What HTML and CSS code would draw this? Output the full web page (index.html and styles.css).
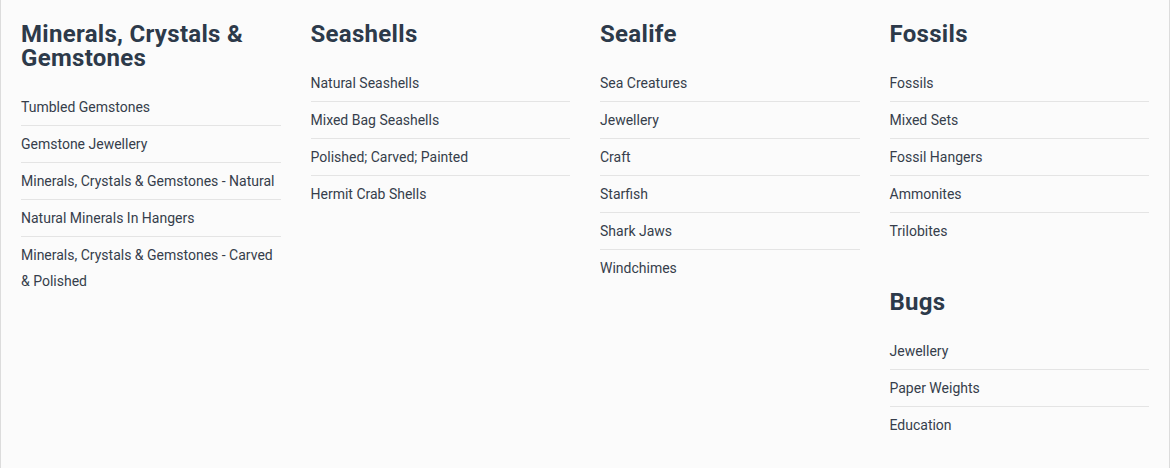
FILE: index.html
```html
<!DOCTYPE html>
<html lang="en">
<head>
<meta charset="utf-8">
<title>Categories</title>
<link rel="stylesheet" href="styles.css">
</head>
<body>
<nav class="mega">
  <div class="col">
    <section class="group">
      <h2 class="group-title">Minerals, Crystals &amp; Gemstones</h2>
      <ul class="links">
        <li><a href="#">Tumbled Gemstones</a></li>
        <li><a href="#">Gemstone Jewellery</a></li>
        <li><a href="#">Minerals, Crystals &amp; Gemstones - Natural</a></li>
        <li><a href="#">Natural Minerals In Hangers</a></li>
        <li><a href="#">Minerals, Crystals &amp; Gemstones - Carved &amp; Polished</a></li>
      </ul>
    </section>
  </div>
  <div class="col">
    <section class="group">
      <h2 class="group-title">Seashells</h2>
      <ul class="links">
        <li><a href="#">Natural Seashells</a></li>
        <li><a href="#">Mixed Bag Seashells</a></li>
        <li><a href="#">Polished; Carved; Painted</a></li>
        <li><a href="#">Hermit Crab Shells</a></li>
      </ul>
    </section>
  </div>
  <div class="col">
    <section class="group">
      <h2 class="group-title">Sealife</h2>
      <ul class="links">
        <li><a href="#">Sea Creatures</a></li>
        <li><a href="#">Jewellery</a></li>
        <li><a href="#">Craft</a></li>
        <li><a href="#">Starfish</a></li>
        <li><a href="#">Shark Jaws</a></li>
        <li><a href="#">Windchimes</a></li>
      </ul>
    </section>
  </div>
  <div class="col">
    <section class="group">
      <h2 class="group-title">Fossils</h2>
      <ul class="links">
        <li><a href="#">Fossils</a></li>
        <li><a href="#">Mixed Sets</a></li>
        <li><a href="#">Fossil Hangers</a></li>
        <li><a href="#">Ammonites</a></li>
        <li><a href="#">Trilobites</a></li>
      </ul>
    </section>
    <section class="group">
      <h2 class="group-title">Bugs</h2>
      <ul class="links">
        <li><a href="#">Jewellery</a></li>
        <li><a href="#">Paper Weights</a></li>
        <li><a href="#">Education</a></li>
      </ul>
    </section>
  </div>
</nav>
</body>
</html>
```

FILE: styles.css
```css
html, body {
  margin: 0;
  padding: 0;
  background: #ffffff;
}

body {
  font-family: Roboto, "Liberation Sans", sans-serif;
}

.mega {
  box-sizing: border-box;
  min-height: 468px;
  display: grid;
  grid-template-columns: repeat(4, 1fr);
  column-gap: 30px;
  align-items: start;
  padding: 22px 20px 20px 20px;
  background: #fbfbfb;
  border-left: 1px solid #dcdcdc;
  border-right: 1px solid #dcdcdc;
}

.col {
  display: flex;
  flex-direction: column;
  gap: 41px;
}

.group-title {
  margin: 0 0 19px 0;
  font-size: 24px;
  line-height: 24px;
  font-weight: 700;
  letter-spacing: 0.3px;
  color: #2d3a4a;
}

.links {
  list-style: none;
  margin: 0;
  padding: 0;
}

.links li {
  padding: 5px 0;
  border-bottom: 1px solid #e4e4e4;
  font-size: 14px;
  line-height: 26px;
}

.links li:last-child {
  border-bottom: none;
}

.links a {
  color: #363e4b;
  text-decoration: none;
}
```
